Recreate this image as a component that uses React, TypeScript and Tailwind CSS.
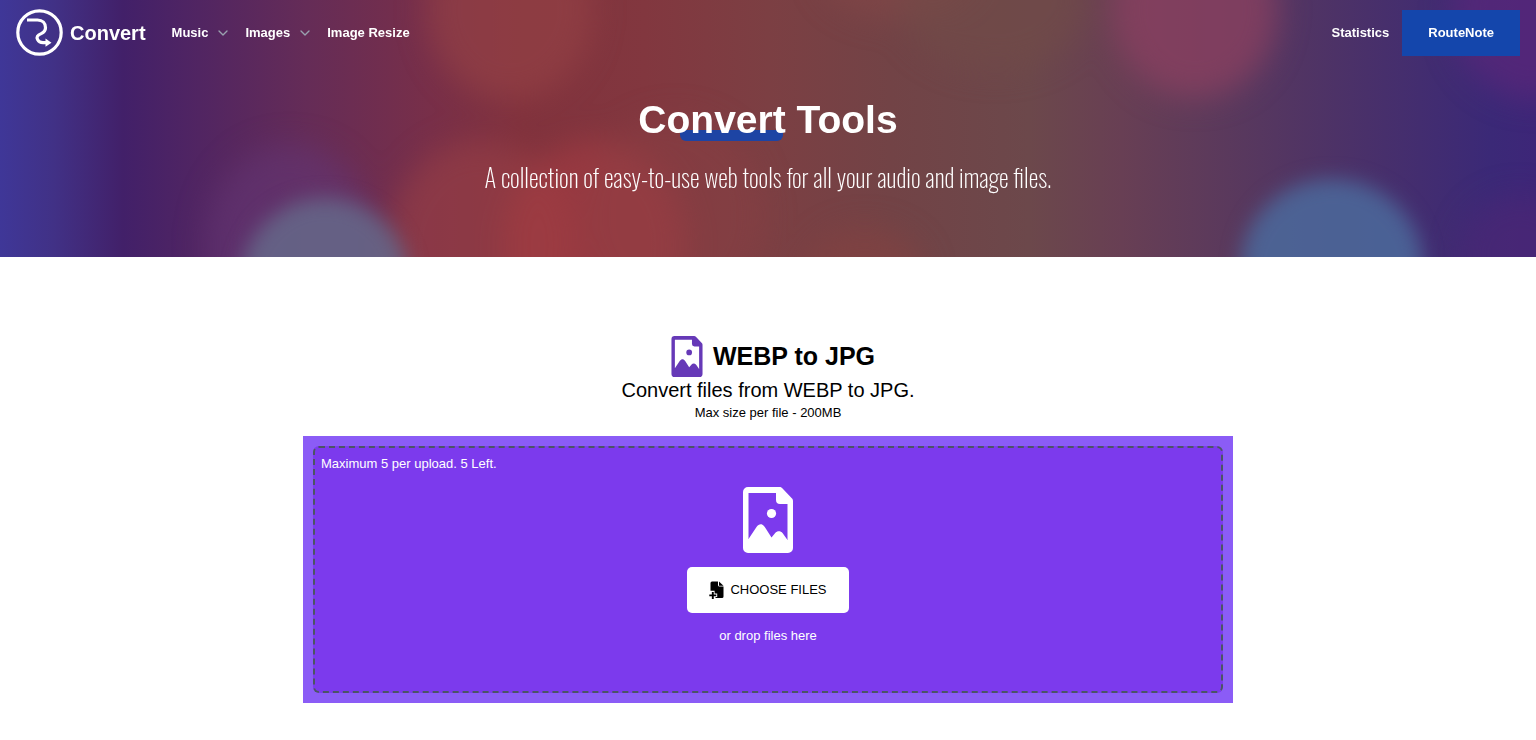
import { useRef } from 'react'
import { ChevronDown } from 'lucide-react'

const MAX_FILES = 5

const menus = [
  { label: 'Music', dropdown: true },
  { label: 'Images', dropdown: true },
  { label: 'Image Resize', dropdown: false },
]

function Logo() {
  return (
    <svg className="size-[47px]" viewBox="0 0 47 47" fill="none" stroke="#fff" aria-hidden="true">
      <circle cx="23.5" cy="23.5" r="21.7" strokeWidth="3.2" />
      <path d="M11 11h10.500c5 0 8 3 8 7.800 0 3.200-1.500 4.600-4.300 5.800-3.800 1.600-5 3.600-3.600 6 1 2 3 3 5.400 3H31" strokeWidth="3.2" />
      <path d="M29.500 29.500l6 4.200-6 4z" fill="#fff" stroke="none" />
    </svg>
  )
}

function FileImageIcon({ className }: { className?: string }) {
  return (
    <svg className={className} viewBox="0 0 50 66" fill="currentColor" fillRule="evenodd" aria-hidden="true">
      <path d="M5 0h31.500c1.200 0 2 .4 2.800 1.200l9.500 10c.8.800 1.200 1.600 1.200 2.800V61a5 5 0 0 1-5 5H5a5 5 0 0 1-5-5V5a5 5 0 0 1 5-5zM5.500 6v46l8-12c2.500-3.600 6-3.600 8.300 0L28.500 50.500l3.500-4.200c2.400-2.600 5.400-2.600 7.700 0L44.500 53V17H37a4 4 0 0 1-4-4V6z" />
      <circle cx="28.500" cy="26.500" r="4.600" />
    </svg>
  )
}

function FilePlusIcon() {
  return (
    <svg className="h-[18px] w-[15px]" viewBox="0 0 15 18" aria-hidden="true">
      <path d="M3 .5h6v3.500a1.500 1.500 0 0 0 1.500 1.500H14.500v10a1.500 1.500 0 0 1-1.500 1.500H6.500v-1h1.700v-3.600H5.600V9.800H1.500V2A1.500 1.500 0 0 1 3 .5z" />
      <path d="M10 .5l4.500 4.200H10z" />
      <path d="M3.800 11v7M.3 14.400h7" stroke="#000" strokeWidth="1.900" fill="none" />
    </svg>
  )
}

function HeroBackground() {
  return (
    <svg
      className="absolute inset-0 -z-20 size-full"
      viewBox="0 0 1536 257"
      preserveAspectRatio="none"
      aria-hidden="true"
    >
      <defs>
        <linearGradient id="hero">
          <stop offset="0" stopColor="#3f3798" />
          <stop offset=".035" stopColor="#413186" />
          <stop offset=".08" stopColor="#422069" />
          <stop offset=".13" stopColor="#512562" />
          <stop offset=".2" stopColor="#652c57" />
          <stop offset=".28" stopColor="#782f49" />
          <stop offset=".34" stopColor="#81323d" />
          <stop offset=".42" stopColor="#82373f" />
          <stop offset=".5" stopColor="#7c3f43" />
          <stop offset=".58" stopColor="#724346" />
          <stop offset=".67" stopColor="#6c484b" />
          <stop offset=".73" stopColor="#683f54" />
          <stop offset=".81" stopColor="#58385e" />
          <stop offset=".89" stopColor="#49306a" />
          <stop offset=".97" stopColor="#3b2977" />
          <stop offset="1" stopColor="#3d2678" />
        </linearGradient>
        <filter id="soft" x="-40%" y="-40%" width="180%" height="180%" colorInterpolationFilters="sRGB">
          <feGaussianBlur stdDeviation="15" />
        </filter>
        <filter id="edge" x="-40%" y="-40%" width="180%" height="180%" colorInterpolationFilters="sRGB">
          <feGaussianBlur stdDeviation="10" />
        </filter>
      </defs>
      <rect width="1536" height="257" fill="url(#hero)" />
      <g filter="url(#soft)">
        <ellipse cx="510" cy="10" rx="83" ry="90" fill="#964346" opacity=".6" />
        <ellipse cx="290" cy="245" rx="85" ry="100" fill="#633674" opacity=".6" />
        <ellipse cx="480" cy="245" rx="92" ry="105" fill="#984046" opacity=".6" />
        <ellipse cx="595" cy="245" rx="90" ry="105" fill="#a53c43" opacity=".6" />
        <ellipse cx="675" cy="215" rx="90" ry="100" fill="#8d4244" opacity=".35" />
        <ellipse cx="865" cy="275" rx="60" ry="48" fill="#87413f" opacity=".5" />
        <ellipse cx="900" cy="-30" rx="80" ry="50" fill="#884848" opacity=".5" />
        <ellipse cx="995" cy="0" rx="95" ry="70" fill="#714b48" opacity=".6" />
        <ellipse cx="1195" cy="10" rx="83" ry="88" fill="#8b4060" opacity=".75" />
        <ellipse cx="1536" cy="15" rx="85" ry="85" fill="#61277a" opacity=".6" />
        <ellipse cx="1520" cy="255" rx="60" ry="60" fill="#512674" opacity=".5" />
      </g>
      <g filter="url(#edge)">
        <ellipse cx="325" cy="282" rx="84" ry="84" fill="#65688a" opacity=".85" />
        <ellipse cx="1332" cy="267" rx="91" ry="88" fill="#4b6a9c" opacity=".85" />
      </g>
    </svg>
  )
}

function Navbar() {
  return (
    <nav className="flex items-center justify-between px-4 pt-[9px] pb-2 text-[13px] font-bold">
      <div className="flex items-center">
        <a href="#" className="flex items-center gap-[7px] text-xl">
          <Logo />
          Convert
        </a>
        <div className="ml-[26px] flex items-center gap-[14px]">
          {menus.map((menu) =>
            menu.dropdown ? (
              <button key={menu.label} type="button" className="flex items-center gap-[7px]">
                {menu.label}
                <ChevronDown className="size-4 text-gray-400" strokeWidth={2} />
              </button>
            ) : (
              <a key={menu.label} href="#">
                {menu.label}
              </a>
            ),
          )}
        </div>
      </div>
      <div className="flex items-center gap-[13px]">
        <a href="#">Statistics</a>
        <a href="#" className="bg-[#1446ac] px-[26px] py-[13px] leading-5">
          RouteNote
        </a>
      </div>
    </nav>
  )
}

export default function App() {
  const fileInput = useRef<HTMLInputElement>(null)

  return (
    <div className="font-['Liberation_Sans',Arial,sans-serif] text-[13px] text-black">
      <header className="relative isolate overflow-hidden text-white">
        <HeroBackground />
        <Navbar />
        <div className="px-4 pt-[33px] pb-[62px] text-center">
          <h1 className="text-[39px] leading-[46px] font-bold">
            <span className="relative inline-block">
              Convert
              <span className="absolute right-[3px] bottom-[2px] left-[42px] -z-10 h-[11px] rounded-b-md bg-[#1d44a4]" />
            </span>{' '}
            Tools
          </h1>
          <p className="mt-4 font-['Oswald',sans-serif] text-[25px] leading-9 font-extralight">
            A collection of easy-to-use web tools for all your audio and image files.
          </p>
        </div>
      </header>

      <main className="mx-auto max-w-[930px] pt-[79px]">
        <div className="text-center">
          <h2 className="flex items-center justify-center gap-[10px] pl-[10px] text-[25px] leading-[41px] font-bold">
            <FileImageIcon className="h-[41px] w-8 text-[#6639b7]" />
            WEBP to JPG
          </h2>
          <p className="text-xl leading-[26px]">Convert files from WEBP to JPG.</p>
          <p className="leading-5">Max size per file - 200MB</p>
        </div>

        <div className="mt-[13px] bg-[#8b5cf6] p-[10px] text-white">
          <div className="rounded-md border-2 border-dashed border-[#4b5563] bg-[#7c3aed] px-[6px] pt-[6px] pb-[45px]">
            <p className="leading-5">
              Maximum {MAX_FILES} per upload. {MAX_FILES} Left.
            </p>
            <div className="mt-[13px] flex flex-col items-center">
              <FileImageIcon className="h-[66px] w-[50px]" />
              <input ref={fileInput} type="file" accept=".webp" multiple hidden aria-label="Choose files" />
              <button
                type="button"
                onClick={() => fileInput.current?.click()}
                className="mt-[14px] flex items-center gap-[6px] rounded-[5px] bg-white px-[22px] py-[13px] leading-5 text-black"
              >
                <FilePlusIcon />
                CHOOSE FILES
              </button>
              <p className="mt-[13px] leading-5">or drop files here</p>
            </div>
          </div>
        </div>
      </main>
    </div>
  )
}
